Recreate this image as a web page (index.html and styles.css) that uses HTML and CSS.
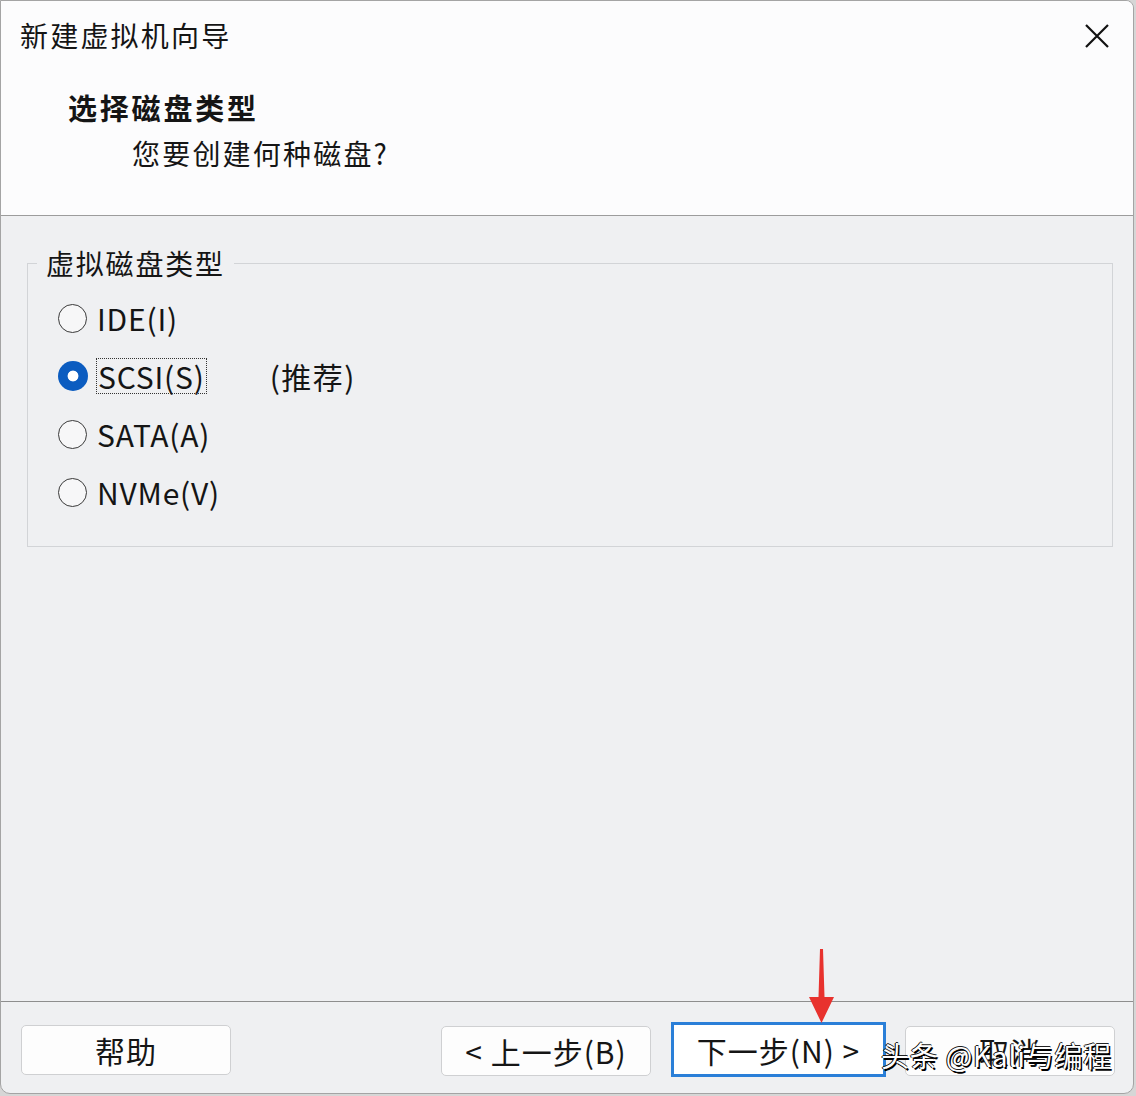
FILE: index.html
```html
<!DOCTYPE html>
<html lang="zh-CN">
<head>
<meta charset="utf-8">
<title>新建虚拟机向导</title>
<link rel="stylesheet" href="styles.css">
</head>
<body>
<div class="window">
  <header class="header">
    <div class="title-row">
      <div class="title">新建虚拟机向导</div>
      <svg class="close" width="24" height="24" viewBox="0 0 24 24"><path d="M1 1 L23 23 M23 1 L1 23" stroke="#111" stroke-width="2.2" fill="none"/></svg>
    </div>
    <div class="heading">选择磁盘类型</div>
    <div class="subheading">您要创建何种磁盘?</div>
  </header>
  <main class="main">
    <fieldset class="group">
      <legend class="legend">虚拟磁盘类型</legend>
      <div class="row"><span class="radio"></span><span class="label">IDE(I)</span></div>
      <div class="row"><span class="radio checked"></span><span class="label focus">SCSI(S)</span><span class="note">(推荐)</span></div>
      <div class="row"><span class="radio"></span><span class="label">SATA(A)</span></div>
      <div class="row"><span class="radio"></span><span class="label">NVMe(V)</span></div>
    </fieldset>
  </main>
  <footer class="footer">
    <button class="btn">帮助</button>
    <div class="btn-group">
      <button class="btn">&lt; 上一步(B)</button>
      <button class="btn primary">下一步(N) &gt;</button>
      <button class="btn">取消</button>
    </div>
  </footer>
  <svg class="arrow" width="30" height="76" viewBox="0 0 30 76"><path d="M14 0 L17 0 L18.5 48 L28 48 L15.5 74 L3 48 L12.5 48 Z" fill="#e8322e"/></svg>
  <div class="watermark">头条 @Kali与编程</div>
</div>
</body>
</html>
```
FILE: styles.css
```css
html, body {
  margin: 0;
  padding: 0;
}
body {
  background: #d6d6d6;
  font-family: "Noto Sans CJK SC", "Noto Sans", sans-serif;
  color: #151515;
}
.window {
  position: relative;
  width: 1132px;
  height: 1092px;
  border: 1px solid #a4a4a4;
  border-radius: 0 8px 10px 10px;
  background: #eff0f2;
  display: flex;
  flex-direction: column;
  overflow: hidden;
}
.header {
  height: 215px;
  box-sizing: border-box;
  background: #fcfcfd;
  border-bottom: 1px solid #9c9c9c;
  padding: 13px 24px 0 19px;
}
.title-row {
  display: flex;
  justify-content: space-between;
  align-items: center;
  height: 42px;
}
.title {
  font-size: 28px;
  line-height: 42px;
  letter-spacing: 2.2px;
}
.close {
  display: block;
  margin-top: 2px;
}
.heading {
  margin: 31px 0 0 48px;
  font-size: 29px;
  font-weight: 700;
  line-height: 40px;
  letter-spacing: 2.8px;
}
.subheading {
  margin: 6px 0 0 112px;
  font-size: 28px;
  line-height: 40px;
  letter-spacing: 2.2px;
}
.main {
  flex: 1;
  padding: 29px 20px 0 26px;
}
.group {
  margin: 0;
  padding: 8px 0 25px 0;
  border: 1px solid #d2d4d7;
  min-width: 0;
}
.legend {
  margin-left: 9px;
  padding: 0 9px;
  font-size: 28px;
  line-height: 36px;
  letter-spacing: 1.8px;
}
.row {
  display: flex;
  align-items: center;
  height: 58px;
  padding-left: 30px;
}
.radio {
  width: 27px;
  height: 27px;
  border: 1.6px solid #3a3a3a;
  border-radius: 50%;
  background: #f7f7f8;
  flex: none;
}
.radio.checked {
  width: 30px;
  height: 30px;
  border: none;
  background: radial-gradient(circle, #ffffff 0 5px, #0b5cc0 5.8px);
}
.label {
  margin-left: 9px;
  font-size: 30px;
  line-height: 34px;
  letter-spacing: 0.8px;
  padding: 0 1px;
}
.label.focus {
  outline: 1.5px dotted #333;
  outline-offset: 0;
}
.note {
  margin-left: 64px;
  font-size: 30px;
  line-height: 34px;
  letter-spacing: 1.5px;
}
.footer {
  height: 92px;
  box-sizing: border-box;
  border-top: 1px solid #8e8e8e;
  padding: 23px 18px 0 20px;
  display: flex;
  justify-content: space-between;
  align-items: flex-start;
}
.btn-group {
  display: flex;
  gap: 20px;
  align-items: center;
}
.btn {
  width: 210px;
  height: 50px;
  box-sizing: border-box;
  background: #fdfdfd;
  border: 1px solid #cfd0d2;
  border-radius: 5px;
  font-family: "Noto Sans CJK SC", "Noto Sans", sans-serif;
  font-size: 30px;
  letter-spacing: 1px;
  color: #151515;
  padding: 0;
  line-height: 46px;
}
.btn.primary {
  width: 215px;
  height: 55px;
  margin: -3px -1px 0 0;
  border: 3px solid #2a7fd8;
  border-radius: 0;
  background: #ffffff;
}
.arrow {
  position: absolute;
  left: 805px;
  top: 948px;
}
.watermark {
  position: absolute;
  left: 880px;
  top: 1034px;
  font-size: 28px;
  line-height: 40px;
  letter-spacing: 0.8px;
  color: #ffffff;
  text-shadow: 1.5px 1.5px 0 #000, -1px 0 0 #000, 0 -1px 0 #222;
  white-space: nowrap;
}
```
